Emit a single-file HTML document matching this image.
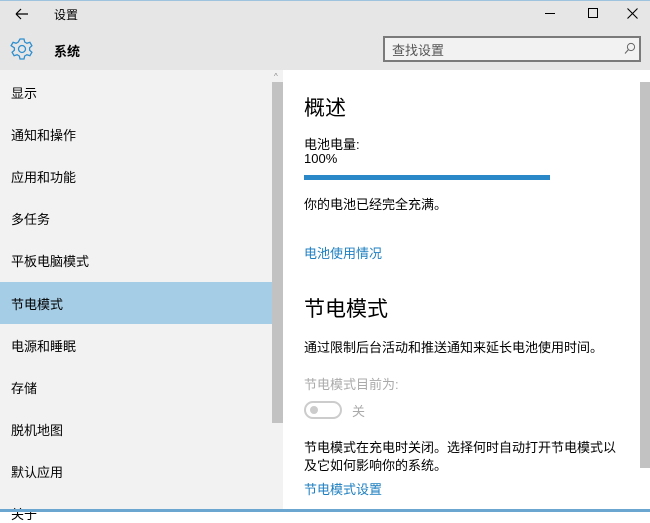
<!DOCTYPE html>
<html><head><meta charset="utf-8"><style>
*{margin:0;padding:0;box-sizing:border-box}
body{width:650px;height:512px;overflow:hidden;position:relative;background:#fff;font-family:"Liberation Sans","Noto Sans CJK SC",sans-serif;color:#000}
.a{position:absolute;white-space:nowrap}
.nav{font-size:13px;left:11px}
.c{font-size:13px;left:304px}
.link{color:#1e7fc0}
</style></head><body>
<div class="a" style="left:0;top:0;width:650px;height:70px;background:#e6e6e6;border-top:1px solid #9ec3de"></div>
<svg class="a" style="left:14px;top:7px" width="16" height="14"><path d="M2 7H14M2 7L7 2M2 7L7 12" stroke="#000" stroke-width="1.2" fill="none"/></svg>
<div class="a" style="left:54px;top:6px;font-size:12px">设置</div>
<div class="a" style="left:545px;top:13px;width:10px;height:1px;background:#000"></div>
<div class="a" style="left:588px;top:8px;width:10px;height:10px;border:1px solid #000"></div>
<svg class="a" style="left:627px;top:8px" width="11" height="11"><path d="M0.5 0.5L10.5 10.5M10.5 0.5L0.5 10.5" stroke="#000" stroke-width="1.1"/></svg>
<svg class="a" style="left:10px;top:37px" width="24" height="24" viewBox="0 0 24 24"><path d="M10 2h4l.7 3 2.2 1.3 3-1 2 3.4-2.3 2.1v2.4l2.3 2.1-2 3.4-3-1-2.2 1.3-.7 3h-4l-.7-3-2.2-1.3-3 1-2-3.4 2.3-2.1v-2.4L1.1 8.7l2-3.4 3 1L8.3 5z" fill="none" stroke="#2f8fcf" stroke-width="1.3"/><circle cx="12" cy="12" r="3.5" fill="none" stroke="#2f8fcf" stroke-width="1.3"/></svg>
<div class="a" style="left:54px;top:41px;font-size:13px;font-weight:bold">系统</div>
<div class="a" style="left:383px;top:36px;width:258px;height:26px;border:2px solid #7a7a7a;background:#f2f2f2"></div>
<div class="a" style="left:392px;top:40px;font-size:13px;color:#555">查找设置</div>
<svg class="a" style="left:624px;top:42px" width="12" height="13"><circle cx="7" cy="5" r="3.6" fill="none" stroke="#666"/><path d="M4.5 7.5L1 11.5" stroke="#666"/></svg>
<div class="a" style="left:0;top:70px;width:283px;height:442px;background:#f2f2f2"></div>
<div class="a" style="left:0;top:282px;width:272px;height:42px;background:#a6cde6"></div>
<div class="a nav" style="top:83px">显示</div>
<div class="a nav" style="top:125px">通知和操作</div>
<div class="a nav" style="top:167px">应用和功能</div>
<div class="a nav" style="top:209px">多任务</div>
<div class="a nav" style="top:251px">平板电脑模式</div>
<div class="a nav" style="top:294px">节电模式</div>
<div class="a nav" style="top:336px">电源和睡眠</div>
<div class="a nav" style="top:378px">存储</div>
<div class="a nav" style="top:420px">脱机地图</div>
<div class="a nav" style="top:462px">默认应用</div>
<div class="a nav" style="top:504px">关于</div>
<div class="a" style="left:272px;top:82px;width:11px;height:341px;background:#c2c2c2"></div>
<div class="a" style="left:274px;top:72px;font-size:8px;color:#888">^</div>
<div class="a" style="left:640px;top:82px;width:10px;height:386px;background:#c2c2c2"></div>
<div class="a" style="left:304px;top:92px;font-size:21px">概述</div>
<div class="a c" style="top:134px">电池电量:</div>
<div class="a c" style="top:151px">100%</div>
<div class="a" style="left:304px;top:175px;width:246px;height:5px;background:#2b88c8"></div>
<div class="a c" style="top:194px">你的电池已经完全充满。</div>
<div class="a c link" style="top:243px">电池使用情况</div>
<div class="a" style="left:304px;top:293px;font-size:21px">节电模式</div>
<div class="a c" style="top:337px">通过限制后台活动和推送通知来延长电池使用时间。</div>
<div class="a c" style="top:374px;color:#aaa">节电模式目前为:</div>
<div class="a" style="left:304px;top:401px;width:38px;height:18px;border:2px solid #ccc;border-radius:9px"></div>
<div class="a" style="left:310px;top:406px;width:8px;height:8px;border-radius:50%;background:#ccc"></div>
<div class="a" style="left:352px;top:401px;font-size:13px;color:#aaa">关</div>
<div class="a c" style="top:437px">节电模式在充电时关闭。选择何时自动打开节电模式以</div>
<div class="a c" style="top:455px">及它如何影响你的系统。</div>
<div class="a c link" style="top:479px">节电模式设置</div>
<div class="a" style="left:0;top:509px;width:650px;height:3px;background:#6aa6cf"></div>
</body></html>
